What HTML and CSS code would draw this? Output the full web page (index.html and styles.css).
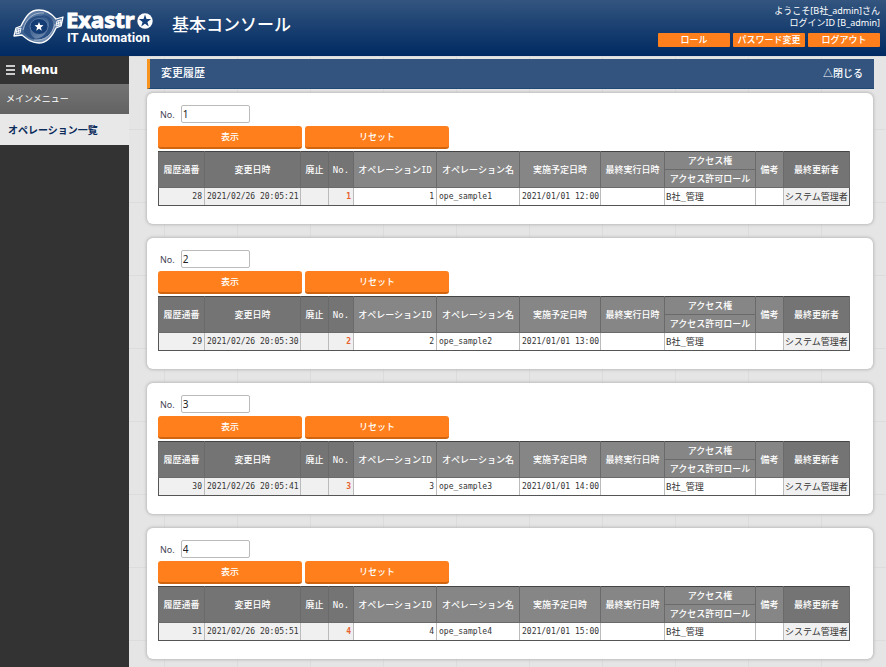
FILE: index.html
```
<!DOCTYPE html>
<html lang="ja">
<head>
<meta charset="utf-8">
<title>基本コンソール</title>
<link rel="stylesheet" href="styles.css">
</head>
<body>
<header class="header">
  <div class="brand">
    <svg class="logo" width="142" height="46" viewBox="0 -4 142 46" role="img" aria-label="Exastro IT Automation">
      <defs>
        <linearGradient id="swirl" x1="0" y1="0" x2="1" y2="1">
          <stop offset="0" stop-color="#8fa6c4"/><stop offset=".45" stop-color="#3c608f"/><stop offset="1" stop-color="#a9bbd2"/>
        </linearGradient>
      </defs>
      <path d="M1 31 L3 23 L8 21 C13 11 17 5 26 5 C34 5 39 9 43 14 L50 12 L48 21 L43 23 C39 32 34 38 26 38 C18 38 14 34 9 30 Z" fill="url(#swirl)" stroke="#fff" stroke-width="1.300" stroke-linejoin="round"/>
      <path d="M11 27 C11 14 24 6 38 14 C28 10 18 15 17 25 C17 30 21 34 26 35 C19 35 14 32 11 27 Z" fill="#2a5084"/>
      <path d="M40 17 C42 28 32 37 20 34 C29 34 35 28 36 19 C36 15 33 11 28 10 C34 10 38 12 40 17 Z" fill="#2a5084"/>
      <path d="M10 25 C13 13 21 7 31 8 M42 19 C39 30 32 36 21 35" fill="none" stroke="#b5c4d8" stroke-width=".8"/>
      <ellipse cx="26" cy="21.500" rx="9" ry="8" fill="#143d75" stroke="#6784ab" stroke-width=".8"/>
      <path d="M26 17l1.200 3.100 3.300.2-2.600 2.100.9 3.300-2.800-1.900-2.800 1.900.9-3.300-2.600-2.100 3.300-.2z" fill="#fff"/>
      <path d="M4 24l4-1-1 5-4 1zM44 16l4-1-1 5-4 1zM6 23.500l-1 5M3.500 26.500l4-1M46 15.500l-1 5M43.500 18.500l4-1" fill="none" stroke="#fff" stroke-width=".9"/>
      <text class="logo-name" x="53" y="23">Exastr</text>
      <text class="logo-product" x="54" y="37">IT Automation</text>
      <circle cx="132" cy="16" r="7.700" fill="#fff"/>
      <path d="M132 9.500l1.500 4.500 4.700.1-3.800 2.800 1.400 4.600-3.800-2.700-3.800 2.700 1.400-4.600-3.800-2.800 4.700-.1z" fill="#15407a"/>
    </svg>
    <h1 class="app-title">基本コンソール</h1>
  </div>
  <div class="account">
    <p>ようこそ[B社_admin]さん</p>
    <p>ログインID [B_admin]</p>
    <div class="account-actions">
      <button type="button">ロール</button>
      <button type="button">パスワード変更</button>
      <button type="button">ログアウト</button>
    </div>
  </div>
</header>
<div class="page">
  <nav class="sidebar">
    <h2 class="menu-title"><svg width="9" height="10" viewBox="0 0 9 10" aria-hidden="true"><path d="M0 1h9M0 5h9M0 9h9" stroke="#fff" stroke-width="1.300"/></svg>Menu</h2>
    <a class="menu-link" href="#main">メインメニュー</a>
    <a class="menu-link current" href="#operations">オペレーション一覧</a>
  </nav>
  <main class="content">
    <div class="section-bar"><h2>変更履歴</h2><a href="#close">△閉じる</a></div>
    <div class="cards" id="cards"></div>
  </main>
</div>
<template id="card">
  <section class="card">
    <form>
      <div class="field"><label>No.</label><input type="text"></div>
      <div class="actions"><button type="button">表示</button><button type="reset">リセット</button></div>
    </form>
    <table>
      <colgroup><col class="c-seq"><col class="c-changed"><col class="c-mark"><col class="c-no"><col class="c-op"><col class="c-op"><col class="c-plan"><col class="c-last"><col class="c-role"><col class="c-mark"><col class="c-user"></colgroup>
      <thead>
        <tr><th class="fixed" rowspan="2">履歴通番</th><th class="fixed" rowspan="2">変更日時</th><th class="fixed" rowspan="2">廃止</th><th class="fixed" rowspan="2">No.</th><th rowspan="2">オペレーションID</th><th rowspan="2">オペレーション名</th><th rowspan="2">実施予定日時</th><th rowspan="2">最終実行日時</th><th>アクセス権</th><th rowspan="2">備考</th><th class="fixed" rowspan="2">最終更新者</th></tr>
        <tr><th>アクセス許可ロール</th></tr>
      </thead>
      <tbody>
        <tr><td class="shade num seq"></td><td class="shade changed"></td><td class="shade"></td><td class="shade num no"></td><td class="num id"></td><td class="name"></td><td class="plan"></td><td></td><td class="jp">B社_管理</td><td></td><td class="shade jp">システム管理者</td></tr>
      </tbody>
    </table>
  </section>
</template>
<script src="script.js"></script>
</body>
</html>
```
FILE: styles.css
```
* { box-sizing: border-box; }

body {
  margin: 0;
  min-height: 100vh;
  display: flex;
  flex-direction: column;
  font-family: "Noto Sans", "Noto Sans CJK JP", sans-serif;
  font-size: 9px;
  color: #333;
}

h1, h2, p { margin: 0; }
a { color: inherit; text-decoration: none; }
button, input { font: inherit; }

.header {
  height: 56px;
  display: flex;
  justify-content: space-between;
  padding: 0 6px 0 13px;
  color: #fff;
  background: linear-gradient(#33557f, #002a62);
}

.brand { display: flex; align-items: flex-start; gap: 17px; }
.logo { display: block; fill: #fff; margin-top: 1px; }
.logo-name { font: bold 22px "Noto Sans", sans-serif; stroke: #fff; stroke-width: 1px; }
.logo-product { font: bold 13px Roboto, sans-serif; }
.app-title { font-size: 17px; line-height: 50px; font-weight: 500; }

.account { padding-top: 5px; text-align: right; }
.account p { line-height: 12px; }
.account-actions { display: flex; gap: 3px; margin-top: 4px; }
.account-actions button {
  width: 72px;
  height: 14px;
  padding: 0;
  border: 0;
  border-radius: 1px;
  line-height: 14px;
  font-weight: 500;
  color: #fff;
  background: #ff7f1c;
}

.page { flex: 1; display: flex; }

.sidebar { flex: 0 0 129px; background: #333; }
.menu-title {
  display: flex;
  align-items: center;
  gap: 6px;
  height: 28px;
  padding-left: 6px;
  font: bold 12px "DejaVu Sans", sans-serif;
  color: #fff;
}
.menu-link {
  display: block;
  height: 30px;
  padding-left: 6px;
  line-height: 30px;
  color: #fff;
  background: linear-gradient(#747474, #626262);
}
.menu-link.current {
  height: 31px;
  padding-left: 8px;
  line-height: 32px;
  font-size: 10px;
  font-weight: bold;
  color: #0c2c5c;
  background: #e8e8e8;
}

.content {
  flex: 1;
  min-width: 0;
  padding: 3px 12px 6px 18px;
  background-color: #e5e5e5;
  background-image:
    linear-gradient(90deg, #dcdcdc 1px, transparent 1px),
    linear-gradient(#dcdcdc 1px, transparent 1px);
  background-size: 73px 73px;
  background-position: 35px 0;
}

.section-bar {
  display: flex;
  justify-content: space-between;
  height: 30px;
  padding: 0 11px;
  line-height: 28px;
  color: #fff;
  background: #32547f;
  border-left: 3px solid #f79420;
  border-bottom: 1px solid #204877;
}
.section-bar h2 { font-size: 11px; font-weight: 500; }
.section-bar a { font-size: 10px; font-weight: 500; }

.cards { display: grid; gap: 14px; margin: 4px 1px 0 0; }
.card {
  padding: 12px 11px 18px;
  border-radius: 6px;
  background: #fff;
  box-shadow: 0 0 3px 1px #bbb;
}

.field { display: flex; align-items: center; gap: 6px; padding-left: 2px; color: #445; }
.field input {
  width: 69px;
  height: 18px;
  padding: 0 1px;
  border: 1px solid #bbb;
  border-radius: 2px;
  font-size: 10px;
  color: #222;
}
.actions { display: flex; gap: 3px; margin: 3px 0 2px; }
.actions button {
  width: 144px;
  height: 23px;
  padding: 0;
  border: 0;
  border-bottom: 2px solid #d1640e;
  border-radius: 3px;
  font-weight: 500;
  color: #fff;
  background: #ff7f1c;
}

table {
  width: 691px;
  table-layout: fixed;
  border-collapse: collapse;
  border: 1px solid #555;
}
th, td { height: 18px; padding: 0 2px; white-space: nowrap; }
th {
  border: 1px solid #6a6a6a;
  line-height: 14px;
  font-family: "DejaVu Sans Mono", "Noto Sans CJK JP", monospace;
  font-weight: 500;
  color: #fff;
  background: #868686;
}
th.fixed { background: #747474; }
td {
  border: 1px solid #bbb;
  border-top-color: #555;
  border-bottom-color: #555;
  font: 8px/14px "DejaVu Sans Mono", "Noto Sans CJK JP", monospace;
}
thead tr:first-child th { border-top-color: #444; }
td:first-child { border-left-color: #555; }
td:last-child { border-right-color: #555; }
td.jp { padding: 0 1px; font-size: 9px; }
.shade { background: #f0f0f0; }
.num { text-align: right; }
td.no { font-weight: bold; color: #e8602c; }

.c-seq { width: 46px; }
.c-changed { width: 96px; }
.c-mark { width: 28px; }
.c-no { width: 25px; }
.c-op { width: 83px; }
.c-plan { width: 81px; }
.c-last { width: 64px; }
.c-role { width: 91px; }
.c-user { width: 66px; }
```
FILE: script.js
```
const records = [
  { seq: 28, changed: "2021/02/26 20:05:21", no: 1, plan: "2021/01/01 12:00" },
  { seq: 29, changed: "2021/02/26 20:05:30", no: 2, plan: "2021/01/01 13:00" },
  { seq: 30, changed: "2021/02/26 20:05:41", no: 3, plan: "2021/01/01 14:00" },
  { seq: 31, changed: "2021/02/26 20:05:51", no: 4, plan: "2021/01/01 15:00" }
];

const template = document.getElementById("card");
for (const r of records) {
  const card = template.content.cloneNode(true);
  const input = card.querySelector("input");
  input.id = "no-" + r.no;
  input.setAttribute("value", r.no);
  card.querySelector("label").htmlFor = input.id;
  card.querySelector(".seq").textContent = r.seq;
  card.querySelector(".changed").textContent = r.changed;
  card.querySelector(".no").textContent = r.no;
  card.querySelector(".id").textContent = r.no;
  card.querySelector(".name").textContent = "ope_sample" + r.no;
  card.querySelector(".plan").textContent = r.plan;
  document.getElementById("cards").append(card);
}
```
